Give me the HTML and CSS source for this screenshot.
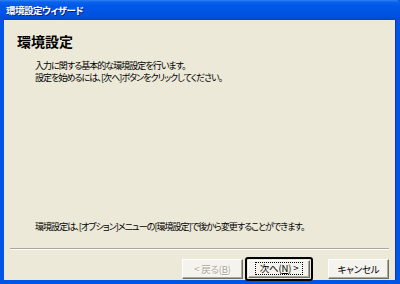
FILE: index.html
```html
<!DOCTYPE html>
<html lang="ja">
<head>
<meta charset="utf-8">
<link rel="stylesheet" href="styles.css">
</head>
<body>
<div class="window">
  <div class="titlebar"><span class="title">環境設定ウィザード</span></div>
  <div class="client">
    <h1 class="heading">環境設定</h1>
    <div class="intro">
      <p>入力に関する基本的な環境設定を行います。</p>
      <p>設定を始めるには、[次へ]ボタンをクリックしてください。</p>
    </div>
    <div class="spacer"></div>
    <p class="note">環境設定は、[オプション]メニューの[環境設定]で後から変更することができます。</p>
    <div class="sep"></div>
    <div class="buttons">
      <div class="btn disabled">&lt; 戻る(<u>B</u>)</div>
      <div class="default-ring"><div class="btn"><span class="focus">次へ(<u>N</u>) &gt;</span></div></div>
      <div class="btn cancel">キャンセル</div>
    </div>
  </div>
</div>
</body>
</html>
```
FILE: styles.css
```css
* { box-sizing: border-box; margin: 0; padding: 0; }
html, body { width: 400px; height: 284px; overflow: hidden; background: #ECE9D8; }
body { font-family: "Noto Sans CJK JP", "Noto Sans", sans-serif; font-feature-settings: "palt" 1; color: #000; }
.window { width: 400px; height: 284px; display: flex; flex-direction: column; background: #0055E5; }
.titlebar {
  height: 20px; flex: none; display: flex; align-items: center; padding-left: 6px;
  background: linear-gradient(#2E82F7 0, #0A62EC 2px, #0058E8 6px, #0054E3 12px, #0050DC 17px, #0046C8 20px);
  border-top-right-radius: 4px;
}
.title { color: #fff; font-size: 9.5px; font-weight: 700; letter-spacing: -0.5px; text-shadow: 1px 1px 0 #0A1E8C; line-height: 12px; }
.client {
  flex: 1; display: flex; flex-direction: column; background: #ECE9D8;
  margin: 0 5px 4px 4px; box-shadow: 1px 0 0 #0A3CB0;
}
.heading { font-size: 14px; font-weight: 700; line-height: 16px; padding: 13px 0 0 13px; letter-spacing: 0; }
.intro { padding: 11px 0 0 31px; font-size: 9px; line-height: 12px; letter-spacing: -0.95px; }
.spacer { flex: 1; }
.note { padding-left: 31px; font-size: 9px; line-height: 12px; letter-spacing: -0.95px; }
.sep { margin: 15px 6px 0 6px; height: 2px; border-top: 1px solid #ACA899; border-bottom: 1px solid #fff; }
.buttons { display: flex; justify-content: flex-end; align-items: center; padding: 7px 6px 0 0; height: 30px; }
.btn {
  width: 61px; height: 20px; display: flex; align-items: center; justify-content: center;
  font-size: 9.5px; background: #F4F3EE; letter-spacing: -0.2px;
  border-top: 1px solid #fff; border-left: 1px solid #fff;
  border-right: 1px solid #716F64; border-bottom: 1px solid #716F64;
  box-shadow: inset -1px -1px 0 #ACA899;
}
.btn u { text-decoration: underline; }
.disabled { color: #ACA899; text-shadow: 1px 1px 0 #fff; }
.default-ring { border: 2px solid #000; border-radius: 3px; padding: 1px; margin-left: 2px; }
.default-ring .btn { width: 62px; height: 18px; }
.focus { border: 1px dotted #000; padding: 0 4px; line-height: 11px; }
.cancel { margin-left: 15px; }
```
